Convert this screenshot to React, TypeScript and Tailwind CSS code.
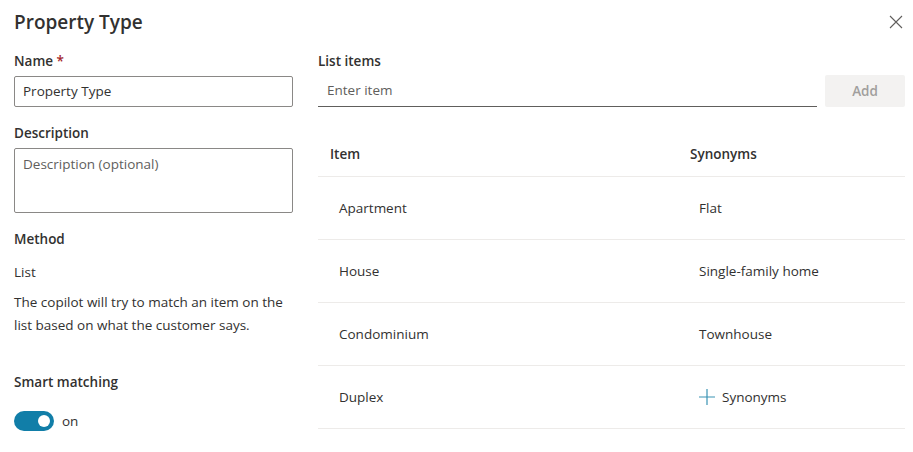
const rows = [
  { item: "Apartment", synonym: "Flat" },
  { item: "House", synonym: "Single-family home" },
  { item: "Condominium", synonym: "Townhouse" },
  { item: "Duplex", synonym: null },
]

function CloseIcon() {
  return (
    <svg width="14" height="14" viewBox="0 0 14 14" className="text-[#605e5c]">
      <path d="M1 1 L13 13 M13 1 L1 13" stroke="currentColor" strokeWidth="1.1" fill="none" />
    </svg>
  )
}

function PlusIcon() {
  return (
    <svg width="18" height="18" viewBox="0 0 18 18" className="text-[#3a93b4]">
      <path d="M9 1 V17 M1 9 H17" stroke="currentColor" strokeWidth="1.2" fill="none" />
    </svg>
  )
}

export default function App() {
  return (
    <div
      className="w-[913px] h-[452px] bg-white text-[#323130] text-[13.5px] pl-[14px] pr-[8px] overflow-hidden"
      style={{ fontFamily: '"Open Sans", "Noto Sans", sans-serif' }}
    >
      <header className="flex items-start justify-between pt-[8px] h-[36px]">
        <h1 className="text-[19px] leading-[28px] font-semibold">Property Type</h1>
        <button className="mt-[7px] mr-[2px]">
          <CloseIcon />
        </button>
      </header>

      <div className="flex gap-[25px] pt-[15px]">
        {/* left column */}
        <section className="w-[279px] flex flex-col">
          <label className="leading-[20px] font-semibold">
            Name <span className="text-[#a4262c]">*</span>
          </label>
          <div className="mt-[5px] h-[31px] border border-[#8a8886] rounded-[2px] flex items-center px-[8px]">
            Property Type
          </div>

          <label className="mt-[16px] leading-[20px] font-semibold">Description</label>
          <div className="mt-[5px] h-[65px] border border-[#8a8886] rounded-[2px] px-[8px] pt-[5px] text-[#605e5c] leading-[20px]">
            Description (optional)
          </div>

          <label className="mt-[16px] leading-[20px] font-semibold">Method</label>
          <p className="mt-[13px] leading-[20px]">List</p>
          <p className="mt-[9px] leading-[23px]">
            The copilot will try to match an item on the list based on what the customer says.
          </p>

          <label className="mt-[35px] leading-[20px] font-semibold">Smart matching</label>
          <div className="mt-[19px] flex items-center gap-[8px]">
            <div className="w-[40px] h-[20px] rounded-full bg-[#117ea8] flex items-center justify-end pr-[4px]">
              <div className="w-[12px] h-[12px] rounded-full bg-white" />
            </div>
            <span className="leading-[20px]">on</span>
          </div>
        </section>

        {/* right column */}
        <section className="flex-1 flex flex-col">
          <label className="leading-[20px] font-semibold">List items</label>
          <div className="mt-[4px] flex gap-[8px]">
            <div className="flex-1 h-[32px] border-b border-[#605e5c] flex items-center px-[9px] text-[#605e5c]">
              Enter item
            </div>
            <button className="w-[80px] h-[32px] rounded-[2px] bg-[#f3f2f1] text-[#a19f9d] font-semibold">
              Add
            </button>
          </div>

          <div className="mt-[26px]">
            <div className="h-[44px] flex items-center border-b border-[#edebe9] font-semibold">
              <div className="w-[360px] pl-[12px]">Item</div>
              <div className="pl-[12px]">Synonyms</div>
            </div>
            {rows.map((r) => (
              <div key={r.item} className="h-[63px] flex items-center border-b border-[#edebe9]">
                <div className="w-[360px] pl-[21px]">{r.item}</div>
                <div className="pl-[21px]">
                  {r.synonym ? (
                    r.synonym
                  ) : (
                    <span className="flex items-center gap-[6px] -ml-[1px]">
                      <PlusIcon /> Synonyms
                    </span>
                  )}
                </div>
              </div>
            ))}
          </div>
        </section>
      </div>
    </div>
  )
}
